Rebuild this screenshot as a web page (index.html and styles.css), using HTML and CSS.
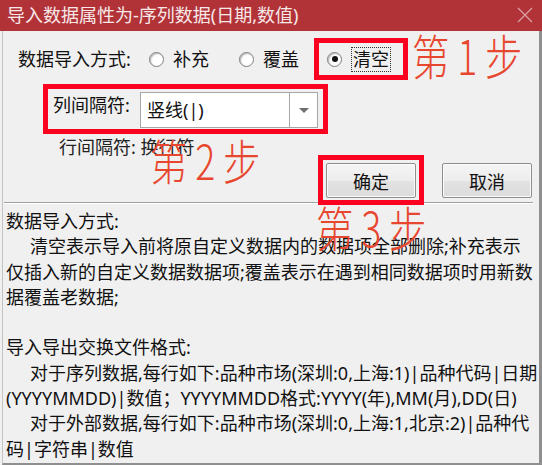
FILE: index.html
```html
<!DOCTYPE html>
<html lang="zh-CN">
<head>
<meta charset="utf-8">
<title>导入数据属性</title>
<link rel="stylesheet" href="styles.css">
</head>
<body>
<div class="window">
  <div class="titlebar">
    <span class="title">导入数据属性为-序列数据(日期,数值)</span>
    <svg class="close" width="16" height="16" viewBox="0 0 16 16"><path d="M1 1L15 15M15 1L1 15" stroke="#d9a1a4" stroke-width="1.3" fill="none"/></svg>
  </div>
  <div class="frame">
    <div class="settings">
      <div class="mode-row">
        <span class="mode-label">数据导入方式:</span>
        <span class="radio-item item1"><span class="radio"></span><span>补充</span></span>
        <span class="radio-item item2"><span class="radio"></span><span>覆盖</span></span>
        <span class="radio-item"><span class="radio checked"></span><span class="focus">清空</span></span>
      </div>
      <div class="col-row">
        <span class="col-label">列间隔符:</span>
        <div class="combo">
          <span class="combo-text">竖线(|)</span>
          <span class="combo-btn"><span class="arrow"></span></span>
        </div>
      </div>
      <div class="line-row">行间隔符: 换行符</div>
      <div class="buttons">
        <button class="btn">确定</button>
        <button class="btn">取消</button>
      </div>
    </div>
    <div class="separator"></div>
    <div class="help">
      <div class="para">
        <div>数据导入方式:</div>
        <div class="indent">清空表示导入前将原自定义数据内的数据项全部删除;补充表示</div>
        <div>仅插入新的自定义数据数据项;覆盖表示在遇到相同数据项时用新数</div>
        <div>据覆盖老数据;</div>
      </div>
      <div class="para">
        <div>导入导出交换文件格式:</div>
        <div class="indent">对于序列数据,每行如下:品种市场(深圳:0,上海:1)|品种代码|日期</div>
        <div>(YYYYMMDD)|数值；YYYYMMDD格式:YYYY(年),MM(月),DD(日)</div>
        <div class="indent">对于外部数据,每行如下:品种市场(深圳:0,上海:1,北京:2)|品种代</div>
        <div>码|字符串|数值</div>
      </div>
    </div>
  </div>
  <div class="mark box1"></div>
  <div class="mark box2"></div>
  <div class="mark box3"></div>
  <div class="step step1">第1步</div>
  <div class="step step2">第2步</div>
  <div class="step step3">第3步</div>
</div>
</body>
</html>
```

FILE: styles.css
```css
* { box-sizing: border-box; }

body {
  margin: 0;
  background: #f0f0f0;
  font-family: "Noto Sans", "Noto Sans CJK SC", sans-serif;
  font-size: 18px;
  color: #111;
}

.window {
  position: relative;
  width: 542px;
  height: 465px;
  overflow: hidden;
}

.titlebar {
  height: 31px;
  background: #b13338;
  color: #f7e8e8;
  line-height: 31px;
  display: flex;
  align-items: center;
  justify-content: space-between;
  padding: 0 9px 0 7px;
}

.close { display: block; margin-top: -1px; }

.frame {
  height: 434px;
  margin-left: 2px;
  border-left: 1px solid #c4c4c4;
  border-right: 3px solid #8f8f8f;
  border-bottom: 2px solid #8f8f8f;
}

.settings { padding-top: 16px; }

.mode-row {
  display: flex;
  align-items: center;
  height: 24px;
  padding-left: 15px;
  line-height: 24px;
}

.mode-label { width: 131px; }

.radio-item {
  display: flex;
  align-items: center;
  gap: 9px;
}

.item1 { width: 90px; }
.item2 { width: 88px; }

.radio {
  position: relative;
  width: 15px;
  height: 15px;
  border-radius: 50%;
  border: 1px solid #7f7f7f;
  background: radial-gradient(circle at 60% 60%, #ffffff 45%, #dedede 100%);
  box-shadow: inset 1px 1px 1px rgba(0, 0, 0, 0.22);
}

.radio.checked::after {
  content: "";
  position: absolute;
  left: 3.5px;
  top: 3.5px;
  width: 6px;
  height: 6px;
  border-radius: 50%;
  background: #111;
}

.focus {
  border: 1px dotted #333;
  padding: 0 1px;
  line-height: 23px;
}

.col-row {
  display: flex;
  align-items: flex-start;
  margin-top: 21px;
  padding-left: 50px;
}

.col-label {
  width: 87px;
  line-height: 24px;
  margin-top: 1px;
}

.combo {
  width: 178px;
  height: 36px;
  border: 1px solid #a7a7a7;
  background: #fff;
  display: flex;
}

.combo-text {
  flex: 1;
  padding-left: 6px;
  line-height: 34px;
}

.combo-btn {
  width: 28px;
  border-left: 1px solid #a7a7a7;
  display: flex;
  align-items: center;
  justify-content: center;
}

.arrow {
  width: 0;
  height: 0;
  border-left: 5px solid transparent;
  border-right: 5px solid transparent;
  border-top: 5px solid #6e6e6e;
}

.line-row {
  margin-top: 7px;
  padding-left: 56px;
  line-height: 24px;
  color: #222;
}

.buttons {
  display: flex;
  justify-content: flex-end;
  gap: 26px;
  padding-right: 7px;
  margin-top: 4px;
}

.btn {
  width: 90px;
  height: 35px;
  padding: 0;
  font-family: "Noto Sans", "Noto Sans CJK SC", sans-serif;
  font-size: 18px;
  color: #111;
  border: 1px solid #8e8e8e;
  border-radius: 2px;
  background: linear-gradient(#f5f5f5, #ececec 50%, #e2e2e2 51%, #dcdcdc);
  box-shadow: inset 0 0 0 1px #fbfbfb;
}

.separator {
  margin-top: 4px;
  margin-left: 1px;
  width: 529px;
  border-top: 1px solid #a0a0a0;
  border-bottom: 1px solid #ffffff;
}

.help {
  padding: 5px 0 0 3px;
  line-height: 25.3px;
  white-space: nowrap;
}

.para + .para { margin-top: 25.3px; }

.indent { padding-left: 24px; }

.mark {
  position: absolute;
  border: 5px solid #fa0321;
}

.box1 { left: 314px; top: 38px; width: 94px; height: 42px; }
.box2 { left: 43px; top: 84px; width: 285px; height: 50px; }
.box3 { left: 318px; top: 155px; width: 106px; height: 50px; }

.step {
  position: absolute;
  font-family: "Noto Sans CJK SC", sans-serif;
  font-size: 48px;
  line-height: 48px;
  font-weight: 300;
  color: #e8472f;
  letter-spacing: 10px;
  white-space: nowrap;
  transform: scaleX(0.78);
  transform-origin: 0 0;
}

.step1 { left: 412px; top: 30px; }
.step2 { left: 150px; top: 135px; }
.step3 { left: 316px; top: 202px; }
```
